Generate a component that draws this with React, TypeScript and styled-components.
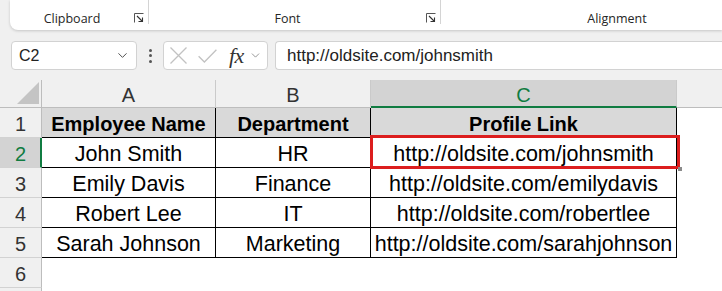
import React from "react";
import styled, { createGlobalStyle } from "styled-components";
import { ChevronDown } from "lucide-react";

const GREEN = "#107c41";

const GlobalStyle = createGlobalStyle`
  html, body { margin: 0; padding: 0; }
  body {
    background: #f0f0f0;
    width: 722px;
    height: 291px;
    overflow: hidden;
    font-family: "Liberation Sans", Arial, sans-serif;
  }
`;

const Page = styled.div`
  width: 722px;
  height: 291px;
  overflow: hidden;
  display: flex;
  flex-direction: column;
`;

const Ribbon = styled.div`
  margin-left: 10px;
  height: 30px;
  background: #fff;
  border-bottom-left-radius: 8px;
  box-shadow: 0 1px 3px rgba(0, 0, 0, 0.18);
  display: flex;
  flex-shrink: 0;
`;

const Group = styled.div<{ $w: number }>`
  width: ${(p) => p.$w}px;
  flex-shrink: 0;
  position: relative;
  display: grid;
  grid-template-columns: 1fr 15px;
  align-items: end;
  padding-bottom: 3px;
  box-sizing: border-box;
  &::after {
    content: "";
    position: absolute;
    right: 0;
    top: 0;
    height: 24px;
    width: 1px;
    background: #d4d4d4;
  }
`;

const GroupLabel = styled.span`
  text-align: center;
  font-family: "Open Sans", "Noto Sans", sans-serif;
  font-size: 12.5px;
  line-height: 16px;
  color: #262626;
`;

const Launcher = styled.svg`
  width: 10px;
  height: 10px;
  margin-bottom: 4px;
`;

const LauncherIcon = () => (
  <Launcher viewBox="0 0 10 10">
    <path d="M0.5 9.5V0.5H9.5" fill="none" stroke="#555" strokeWidth="1" />
    <path d="M3 3L8.5 8.5M8.5 4.5V8.5H4.5" fill="none" stroke="#333" strokeWidth="1.1" />
  </Launcher>
);

const FormulaRow = styled.div`
  margin-top: 11px;
  height: 29px;
  padding-left: 11px;
  display: flex;
  align-items: center;
  flex-shrink: 0;
`;

const Box = styled.div<{ $w?: number }>`
  height: 29px;
  box-sizing: border-box;
  background: #fff;
  border: 1px solid #d2d2d2;
  border-radius: 4px;
  display: flex;
  align-items: center;
  ${(p) => (p.$w ? `width: ${p.$w}px; flex-shrink: 0;` : "")}
`;

const NameBox = styled(Box)`
  padding: 0 6px 0 7px;
  justify-content: space-between;
  font-size: 16px;
  color: #222;
`;

const Dots = styled.div`
  width: 26px;
  display: flex;
  flex-direction: column;
  align-items: center;
  gap: 2.5px;
  & > span {
    width: 3px;
    height: 3px;
    background: #555;
    border-radius: 50%;
  }
`;

const FuncBox = styled(Box)`
  padding: 0 2px 0 6px;
  gap: 0;
`;

const GlyphIcon = styled.svg<{ $ml?: number }>`
  flex-shrink: 0;
  margin-left: ${(p) => p.$ml ?? 0}px;
`;

const Fx = styled.span`
  font-family: "Liberation Serif", "DejaVu Serif", serif;
  font-style: italic;
  font-size: 22px;
  line-height: 22px;
  color: #333;
  margin-left: 12px;
  margin-right: 5px;
  letter-spacing: -0.5px;
`;

const Input = styled(Box)`
  flex: 1;
  margin-left: 7px;
  border-right: none;
  border-radius: 4px 0 0 4px;
  padding-left: 11px;
  font-size: 17px;
  color: #222;
`;

const Sheet = styled.div`
  margin-top: 10px;
  display: grid;
  grid-template-columns: 42px 174px 155px 306px 45px;
  grid-template-rows: 28px;
  grid-auto-rows: 30px;
`;

const Corner = styled.div`
  background: #f0f0f0;
  border-right: 1px solid #bdbdbd;
  border-bottom: 1px solid #bdbdbd;
  display: flex;
  justify-content: flex-end;
  align-items: flex-end;
  padding: 0 2px 3px 0;
`;

const ColHead = styled.div<{ $sel?: boolean; $last?: boolean }>`
  background: ${(p) => (p.$sel ? "#d3d3d3" : "#f0f0f0")};
  border-right: ${(p) => (p.$last ? "none" : "1px solid #cacaca")};
  border-bottom: ${(p) => (p.$sel ? `2px solid ${GREEN}` : "1px solid #bdbdbd")};
  color: ${(p) => (p.$sel ? GREEN : "#333")};
  font-size: 20px;
  display: flex;
  align-items: center;
  justify-content: center;
  padding-top: ${(p) => (p.$sel ? "4px" : "3px")};
`;

const RowHead = styled.div<{ $sel?: boolean }>`
  background: ${(p) => (p.$sel ? "#d3d3d3" : "#f0f0f0")};
  border-right: ${(p) => (p.$sel ? `2px solid ${GREEN}` : "1px solid #bdbdbd")};
  border-bottom: 1px solid #d2d2d2;
  color: ${(p) => (p.$sel ? GREEN : "#333")};
  font-size: 20px;
  display: flex;
  align-items: center;
  justify-content: center;
  padding-top: 4px;
  padding-left: ${(p) => (p.$sel ? "1px" : "0")};
`;

const Cell = styled.div<{ $head?: boolean; $edge?: boolean }>`
  position: relative;
  background: ${(p) => (p.$head ? "#d9d9d9" : "#fff")};
  border-right: ${(p) => (p.$edge ? "none" : "1px solid #000")};
  border-bottom: ${(p) => (p.$edge ? "none" : "1px solid #000")};
  font-size: ${(p) => (p.$head ? "20px" : "21.5px")};
  font-weight: ${(p) => (p.$head ? 700 : 400)};
  color: #000;
  display: flex;
  align-items: center;
  justify-content: center;
  white-space: nowrap;
  padding-top: 4px;
`;

const Highlight = styled.div`
  position: absolute;
  left: -1px;
  top: -3px;
  right: -4px;
  bottom: -2px;
  border: 3px solid #dc1e1e;
  box-sizing: border-box;
  z-index: 2;
  pointer-events: none;
  &::after {
    content: "";
    position: absolute;
    right: -5px;
    bottom: -5px;
    width: 4px;
    height: 4px;
    background: #8a8a8a;
  }
`;

const header = ["Employee Name", "Department", "Profile Link"];
const data = [
  ["John Smith", "HR", "http://oldsite.com/johnsmith"],
  ["Emily Davis", "Finance", "http://oldsite.com/emilydavis"],
  ["Robert Lee", "IT", "http://oldsite.com/robertlee"],
  ["Sarah Johnson", "Marketing", "http://oldsite.com/sarahjohnson"],
];

export default function App() {
  return (
    <Page>
      <GlobalStyle />
      <Ribbon>
        <Group $w={139}>
          <GroupLabel>Clipboard</GroupLabel>
          <LauncherIcon />
        </Group>
        <Group $w={292}>
          <GroupLabel>Font</GroupLabel>
          <LauncherIcon />
        </Group>
        <Group $w={367}>
          <GroupLabel>Alignment</GroupLabel>
          <LauncherIcon />
        </Group>
      </Ribbon>

      <FormulaRow>
        <NameBox $w={126}>
          <span>C2</span>
          <ChevronDown size={15} color="#444" strokeWidth={1.5} />
        </NameBox>
        <Dots>
          <span />
          <span />
          <span />
        </Dots>
        <FuncBox $w={105}>
          <GlyphIcon width="17" height="17" viewBox="0 0 17 17">
            <path d="M0.5 0.5L16.5 16.5M16.5 0.5L0.5 16.5" stroke="#c2c2c2" strokeWidth="1.3" fill="none" />
          </GlyphIcon>
          <GlyphIcon $ml={11} width="19" height="14" viewBox="0 0 19 14">
            <path d="M0.6 7.2L6.4 13L18.4 0.8" stroke="#c2c2c2" strokeWidth="1.3" fill="none" />
          </GlyphIcon>
          <Fx>fx</Fx>
          <ChevronDown size={13} color="#777" strokeWidth={1.4} />
        </FuncBox>
        <Input>http://oldsite.com/johnsmith</Input>
      </FormulaRow>

      <Sheet>
        <Corner>
          <svg width="22" height="22" viewBox="0 0 22 22">
            <polygon points="22,0 22,22 0,22" fill="#c4c4c4" />
          </svg>
        </Corner>
        <ColHead>A</ColHead>
        <ColHead>B</ColHead>
        <ColHead $sel>C</ColHead>
        <ColHead $last />

        <RowHead>1</RowHead>
        {header.map((h) => (
          <Cell key={h} $head>
            {h}
          </Cell>
        ))}
        <Cell $edge />

        {data.map((row, i) => (
          <React.Fragment key={i}>
            <RowHead $sel={i === 0}>{i + 2}</RowHead>
            {row.map((v, j) => (
              <Cell key={j}>
                {v}
                {i === 0 && j === 2 && <Highlight />}
              </Cell>
            ))}
            <Cell $edge />
          </React.Fragment>
        ))}

        <RowHead>6</RowHead>
        <Cell $edge />
        <Cell $edge />
        <Cell $edge />
        <Cell $edge />

        <RowHead />
        <Cell $edge />
        <Cell $edge />
        <Cell $edge />
        <Cell $edge />
      </Sheet>
    </Page>
  );
}
